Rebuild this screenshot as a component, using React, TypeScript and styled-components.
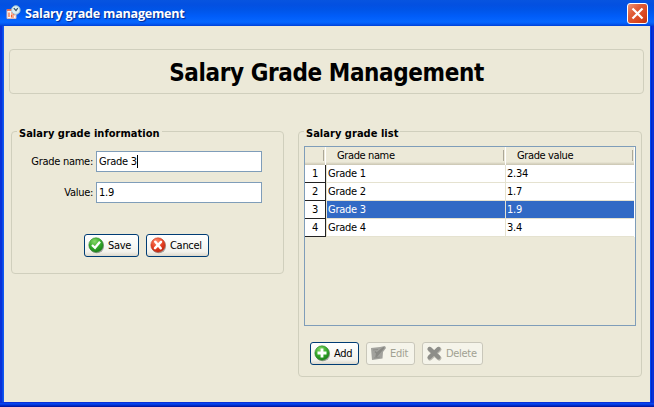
import React from "react";
import styled, { createGlobalStyle } from "styled-components";

const Global = createGlobalStyle`
  * { box-sizing: border-box; }
  body { margin: 0; overflow: hidden; }
`;

const Window = styled.div`
  width: 654px;
  height: 407px;
  display: flex;
  flex-direction: column;
  background: linear-gradient(#0645ee 0 1px, #0020b8 3px, #001590 4px) bottom / 100% 4px no-repeat, #0831d9;
  font: 11px/14px "DejaVu Sans Condensed", "DejaVu Sans", sans-serif;
  font-stretch: condensed;
  color: #000;
  white-space: nowrap;
`;

const TitleBar = styled.header`
  height: 26px;
  flex: none;
  display: flex;
  align-items: center;
  padding: 0 6px 0 5px;
  background: linear-gradient(#0754df 0, #0350e1 5px, #0055e8 10px, #005cf8 16px, #0667ff 22px, #0359f2 24px, #003fd5 26px);
`;

const Caption = styled.span`
  margin: 1px auto 0 4px;
  color: #fff;
  font: bold 12.6px/16px "Open Sans", "Noto Sans", sans-serif;
  font-stretch: normal;
  letter-spacing: -0.25px;
  text-shadow: 1px 1px 1px #06278c;
`;

const CloseButton = styled.button`
  width: 21px;
  height: 21px;
  padding: 0;
  display: grid;
  place-items: center;
  border: 1px solid #fff;
  border-radius: 3px;
  background: linear-gradient(135deg, #ee9375, #e05d38 35%, #d8441c 75%, #b93212);
`;

const Client = styled.main`
  height: 376px;
  flex: none;
  margin: 0 4px;
  padding: 23px 6px 0 5px;
  background: #ece9d8;
  box-shadow: -1px 0 #0f56f2, -2px 0 #0a48e5, 1px 0 #0648ee, 2px 0 #0028c8;
`;

const Heading = styled.h1`
  margin: 0;
  height: 45px;
  border: 1px solid #d0cfbd;
  border-radius: 4px;
  text-align: center;
  font: bold 24px/46px "DejaVu Sans Condensed", "DejaVu Sans", sans-serif;
  font-stretch: condensed;
  letter-spacing: -0.4px;
`;

const Columns = styled.div`
  display: flex;
  align-items: flex-start;
  gap: 14px;
  padding: 37px 0 0 2px;
`;

const Group = styled.section<{ $width: number; $height: number }>`
  width: ${(p) => p.$width}px;
  height: ${(p) => p.$height}px;
  border: 1px solid #d0cfbd;
  border-radius: 4px;
`;

const Legend = styled.h2`
  width: max-content;
  height: 14px;
  margin: -7px 0 0 5px;
  padding: 0 2px;
  background: #ece9d8;
  font: bold 11px/17px "DejaVu Sans Condensed", "DejaVu Sans", sans-serif;
  font-stretch: condensed;
  letter-spacing: 0.03px;
`;

const Form = styled.div`
  display: grid;
  grid-template-columns: 81px 166px;
  gap: 10px 3px;
  padding-top: 12px;
`;

const Label = styled.label`
  line-height: 21px;
  text-align: right;
  letter-spacing: -0.28px;
`;

const Field = styled.div`
  height: 21px;
  display: flex;
  align-items: center;
  padding-left: 2px;
  border: 1px solid #7f9db9;
  background: #fff;
  letter-spacing: -0.25px;
`;

const Caret = styled.i`
  width: 1px;
  height: 13px;
  background: #000;
`;

const Actions = styled.div<{ $pad: string }>`
  display: flex;
  gap: 7px;
  padding: ${(p) => p.$pad};
`;

const Button = styled.button<{ $width: number; $off?: boolean }>`
  width: ${(p) => p.$width}px;
  height: 23px;
  display: flex;
  align-items: center;
  gap: 3px;
  padding: 0 0 0 4px;
  border: 1px solid ${(p) => (p.$off ? "#c9c7ba" : "#003c74")};
  border-radius: 3px;
  background: ${(p) => (p.$off ? "#f5f4ea" : "linear-gradient(#fff, #f3f2ec 80%, #dcd8cc)")};
  color: ${(p) => (p.$off ? "#a1a192" : "#000")};
  font: inherit;
  letter-spacing: -0.3px;

  svg { flex: none; margin: -1px 0 0 -1px; }
`;

const Grid = styled.div`
  width: 332px;
  height: 180px;
  margin: 7px 0 0 5px;
  border: 1px solid #7f9db9;
`;

const HeadRow = styled.div`
  display: grid;
  grid-template-columns: 20px 179px 128px;
  column-gap: 1px;
  width: 330px;
  height: 18px;
  background: #fff;
`;

const HeadCell = styled.div`
  padding-left: 11px;
  line-height: 17px;
  letter-spacing: -0.38px;
  background:
    linear-gradient(#aca899, #aca899) right 1px top 3px / 1px 11px no-repeat,
    linear-gradient(#ece9d8 15px, #dedac8 16px, #cac5b2 18px);
  box-shadow: 1px 0 #fff;
`;

const Row = styled.div`
  display: grid;
  grid-template-columns: 21px 179px 129px;
  width: 330px;
  height: 18px;
  background: #fff;
  letter-spacing: -0.25px;
`;

const RowNumber = styled.div`
  border-right: 1px solid #222;
  border-bottom: 1px solid #222;
  line-height: 17px;
  text-align: center;
`;

const Cell = styled.div<{ $selected: boolean }>`
  margin-left: 1px;
  padding-left: 1px;
  border-bottom: 1px solid #e5e2d0;
  line-height: 17px;
  background: ${(p) => (p.$selected ? "#316ac5" : "#fff")};
  color: ${(p) => (p.$selected ? "#fff" : "#000")};
  box-shadow: -1px 0 #e5e2d0;
`;

const AppIcon = () => (
  <svg width="16" height="16" viewBox="0 0 16 16">
    <path d="M2 4.500h9v9H2z" fill="#f9f6f4" stroke="#d5b9bb" />
    <path d="M2 5h5" stroke="#e05030" strokeWidth="1.500" />
    <path d="M4 7.500v4.500M6 8h3v2H6.500v2H9" fill="none" stroke="#f2622f" strokeWidth="1.200" />
    <circle cx="10.800" cy="5" r="4.300" fill="#d9eef5" stroke="#9fc0d0" />
    <path d="M8.800 3.200l2.200 2.300 1.700-2.300" fill="none" stroke="#314f68" strokeWidth="1.200" />
  </svg>
);

const Ball = ({ kind }: { kind: "ok" | "cancel" | "add" }) => {
  const red = kind === "cancel";
  return (
    <svg width="17" height="17" viewBox="0 0 17 17">
      <defs>
        <radialGradient id={`ball-${kind}`} cx=".4" cy=".25" r=".8">
          <stop offset="0" stopColor={red ? "#ff8a6b" : "#85d667"} />
          <stop offset=".55" stopColor={red ? "#e64224" : "#36a92b"} />
          <stop offset="1" stopColor={red ? "#b91e0a" : "#167a16"} />
        </radialGradient>
      </defs>
      <circle cx="8.800" cy="9" r="7.300" fill="#555" opacity=".5" />
      <circle cx="8" cy="8" r="7.200" fill={`url(#ball-${kind})`} stroke={red ? "#c6432b" : "#2b8729"} strokeWidth=".6" />
      {kind === "ok" && <path d="M4 8l3 2.800 5-6" fill="none" stroke="#fff" strokeWidth="2.300" />}
      {kind === "cancel" && <path d="M5.300 4.700l5.400 6.600M11 4.800l-6 6.400" stroke="#fff" strokeWidth="2.500" strokeLinecap="round" />}
      {kind === "add" && <path d="M8 3.500v9M3.500 8h9" stroke="#fff" strokeWidth="2.800" />}
    </svg>
  );
};

const EditIcon = () => (
  <svg width="17" height="17" viewBox="0 0 17 17">
    <path d="M1 3l9-1 5-1 1 2-3 4-.500 6.500L2 15z" fill="#a2a29d" />
    <path d="M5 6.500l2 2M14 2.500l-6 7-2 2.500 1-4z" fill="#898984" stroke="#898984" strokeWidth="1.600" />
    <path d="M3 5l5-.500M4 13l6-1" stroke="#8f8f8a" />
  </svg>
);

const DeleteIcon = () => (
  <svg width="17" height="17" viewBox="0 0 17 17">
    <path d="M4 4.500l9 8.500M13 4.500L4 13" stroke="#bbb9b0" strokeWidth="5" strokeLinecap="round" />
    <path d="M3.500 3.800l9 8.500M12.500 3.800l-9 8.500" stroke="#8e8e89" strokeWidth="4" strokeLinecap="round" />
  </svg>
);

const grades = [
  ["Grade 1", "2.34"],
  ["Grade 2", "1.7"],
  ["Grade 3", "1.9"],
  ["Grade 4", "3.4"],
];

export default function App() {
  return (
    <Window>
      <Global />
      <TitleBar>
        <AppIcon />
        <Caption>Salary grade management</Caption>
        <CloseButton aria-label="Close">
          <svg width="13" height="13" viewBox="0 0 13 13">
            <path d="M1.500 1.500l10 10M11.500 1.500l-10 10" stroke="#fff" strokeWidth="2.200" />
          </svg>
        </CloseButton>
      </TitleBar>
      <Client>
        <Heading>Salary Grade Management</Heading>
        <Columns>
          <Group $width={273} $height={143}>
            <Legend>Salary grade information</Legend>
            <Form>
              <Label>Grade name:</Label>
              <Field>Grade 3<Caret /></Field>
              <Label>Value:</Label>
              <Field>1.9</Field>
            </Form>
            <Actions $pad="31px 0 0 72px">
              <Button $width={55}><Ball kind="ok" />Save</Button>
              <Button $width={63}><Ball kind="cancel" />Cancel</Button>
            </Actions>
          </Group>
          <Group $width={344} $height={246}>
            <Legend>Salary grade list</Legend>
            <Grid>
              <HeadRow>
                <HeadCell />
                <HeadCell>Grade name</HeadCell>
                <HeadCell>Grade value</HeadCell>
              </HeadRow>
              {grades.map(([name, value], i) => (
                <Row key={name}>
                  <RowNumber>{i + 1}</RowNumber>
                  <Cell $selected={i === 2}>{name}</Cell>
                  <Cell $selected={i === 2}>{value}</Cell>
                </Row>
              ))}
            </Grid>
            <Actions $pad="16px 0 0 11px">
              <Button $width={49}><Ball kind="add" />Add</Button>
              <Button $width={49} $off disabled><EditIcon />Edit</Button>
              <Button $width={61} $off disabled><DeleteIcon />Delete</Button>
            </Actions>
          </Group>
        </Columns>
      </Client>
    </Window>
  );
}
